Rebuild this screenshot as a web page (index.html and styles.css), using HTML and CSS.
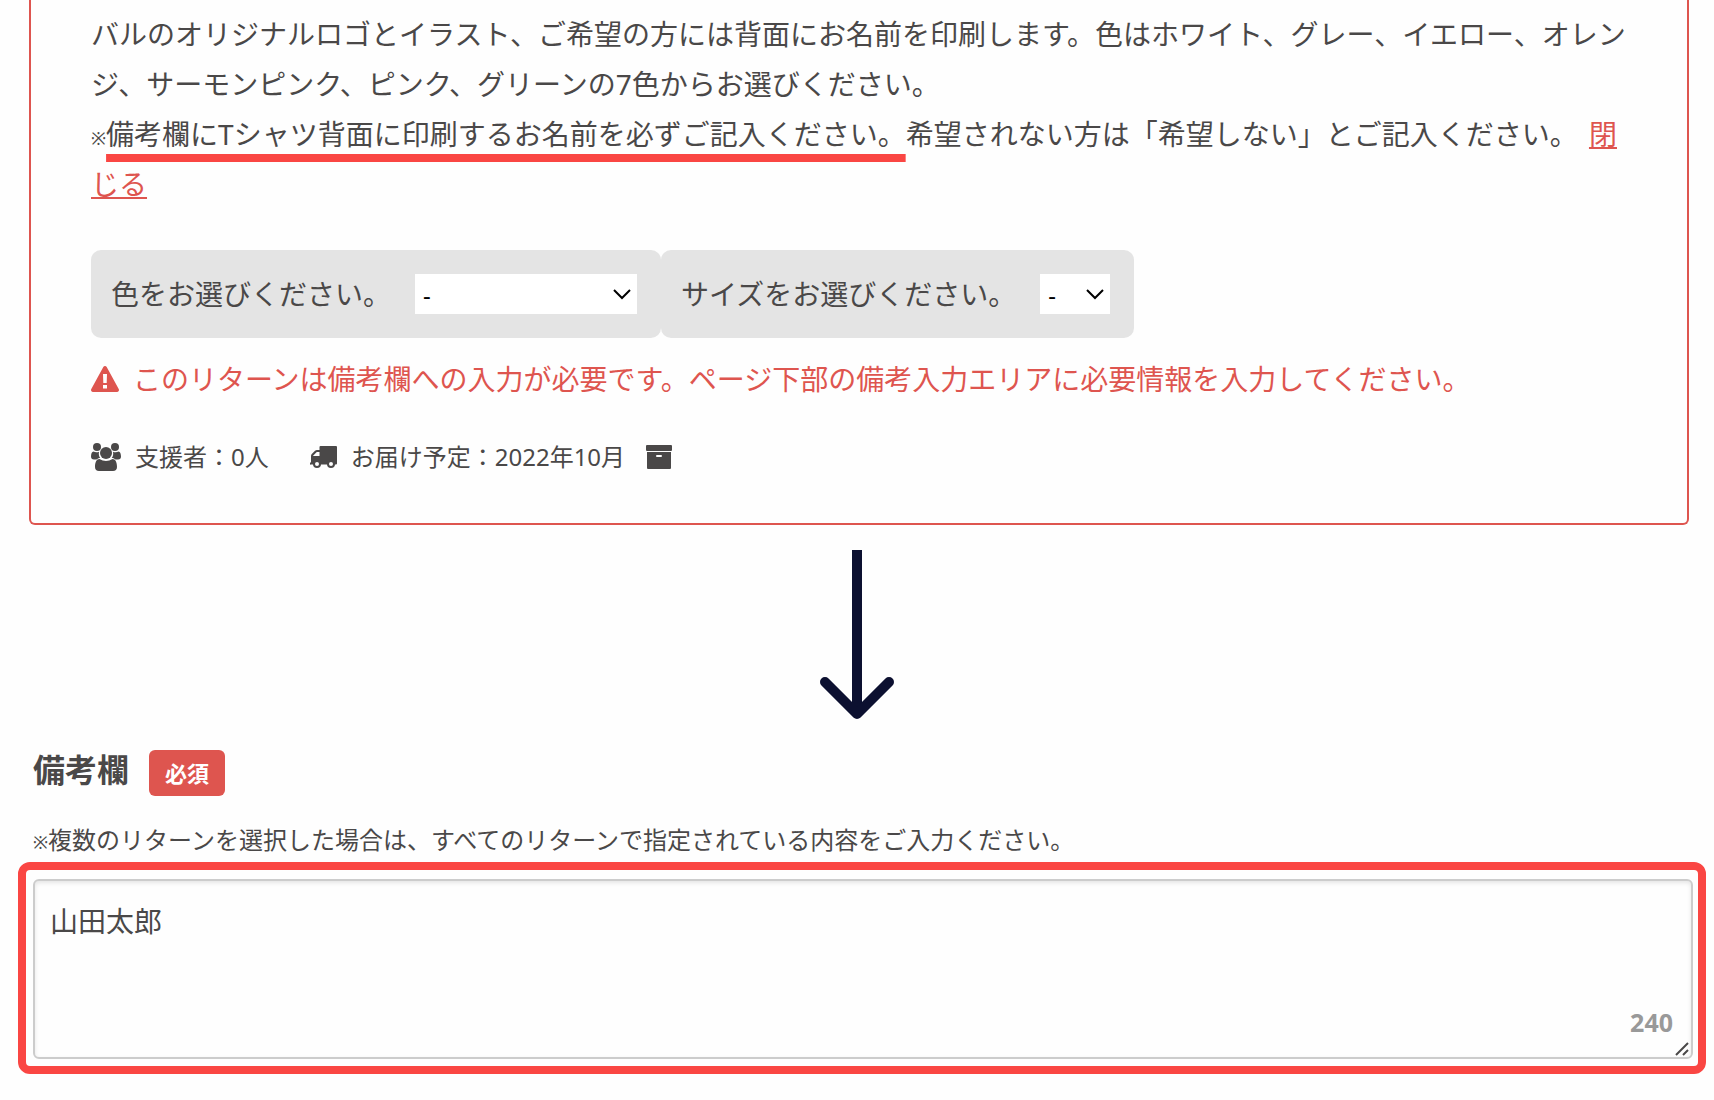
FILE: index.html
```html
<!DOCTYPE html>
<html lang="ja">
<head>
    <meta charset="UTF-8">
    <meta name="viewport" content="width=device-width, initial-scale=1">
    <title>リターンの選択</title>
    <link rel="stylesheet" href="styles.css">
</head>
<body>
    <div class="return-card">
        <p class="description">
            バルのオリジナルロゴとイラスト、ご希望の方には背面にお名前を印刷します。色はホワイト、グレー、イエロー、オレンジ、サーモンピンク、ピンク、グリーンの7色からお選びください。<br>
            <span class="mark">※</span><span class="highlight">備考欄にTシャツ背面に印刷するお名前を必ずご記入ください。</span>希望されない方は「希望しない」とご記入ください。
            <a class="close-link" href="#">閉じる</a>
        </p>

        <div class="options">
            <div class="option">
                <label for="color">色をお選びください。</label>
                <div class="select-wrap">
                    <select id="color" class="select-color">
                        <option>-</option>
                        <option>ホワイト</option>
                        <option>グレー</option>
                        <option>イエロー</option>
                        <option>オレンジ</option>
                        <option>サーモンピンク</option>
                        <option>ピンク</option>
                        <option>グリーン</option>
                    </select>
                    <svg class="chevron" viewBox="0 0 18 12"><path d="M1 2l8 8 8-8"/></svg>
                </div>
            </div>
            <div class="option">
                <label for="size">サイズをお選びください。</label>
                <div class="select-wrap">
                    <select id="size" class="select-size">
                        <option>-</option>
                        <option>S</option>
                        <option>M</option>
                        <option>L</option>
                    </select>
                    <svg class="chevron" viewBox="0 0 18 12"><path d="M1 2l8 8 8-8"/></svg>
                </div>
            </div>
        </div>

        <p class="warning">
            <svg class="icon-warning" viewBox="0 0 28 26">
                <path fill-rule="evenodd" d="M12.3 1a2 2 0 0 1 3.4 0L27.7 23a2 2 0 0 1-1.7 3H2a2 2 0 0 1-1.700-3zM12 8l.3 9h3.400l.3-9zM12 19v3.500h4V19z"/>
            </svg>
            このリターンは備考欄への入力が必要です。ページ下部の備考入力エリアに必要情報を入力してください。
        </p>

        <div class="meta">
            <span class="meta-item">
                <svg class="icon-users" viewBox="0 0 30 28">
                    <circle cx="6" cy="4" r="4"/>
                    <circle cx="24" cy="4" r="4"/>
                    <circle cx="15" cy="10" r="6"/>
                    <path d="M2.500 8.500C4 9.500 6.500 9.500 8 8.700c-.5 2.800 0 4.500 1.200 6.300-1.700 0-2.700.6-3.700 1.500H3c-2 0-3-1-3-3 0-2.500.8-5 2.500-5z"/>
                    <path d="M27.500 8.500c-1.500 1-4 1-5.500.2.500 2.800 0 4.500-1.200 6.300 1.700 0 2.700.6 3.700 1.500H27c2 0 3-1 3-3 0-2.500-.8-5-2.500-5z"/>
                    <path d="M8.500 16c4 2.500 9 2.500 13 0 3 0 4.500 3.500 4.500 8 0 2.500-1.500 4-4 4H8c-2.500 0-4-1.500-4-4 0-4.500 1.500-8 4.500-8z"/>
                </svg>
                支援者：0人
            </span>
            <span class="meta-item">
                <svg class="icon-truck" viewBox="0 0 27 22">
                    <path fill-rule="evenodd" d="M10.500 0H26a1 1 0 0 1 1 1v16.500a1 1 0 0 1-1 1H1a1 1 0 0 1-1-2h1V10c0-1 .3-1.600 1-2.300l3-3C5.600 4.200 6.300 4 7 4h2.500V1a1 1 0 0 1 1-1zM3 10h6.500V6H7.200c-.3 0-.5.1-.7.3L3.300 9.500z"/>
                    <g class="wheels">
                        <circle cx="7" cy="18" r="3"/>
                        <circle cx="21" cy="18" r="3"/>
                    </g>
                </svg>
                お届け予定：2022年10月
            </span>
            <svg class="icon-box" viewBox="0 0 26 24">
                <rect width="26" height="6" rx="1"/>
                <path fill-rule="evenodd" d="M1 7h24v16a1 1 0 0 1-1 1H2a1 1 0 0 1-1-1zM11 10a1 1 0 0 0 0 2h4a1 1 0 0 0 0-2z"/>
            </svg>
        </div>
    </div>

    <svg class="arrow" viewBox="0 0 74 169">
        <path d="M37 0v162"/>
        <path class="arrow-head" d="M5 132l32 32 32-32"/>
    </svg>

    <div class="remarks">
        <div class="remarks-title">
            <h2><label for="remarks">備考欄</label></h2>
            <span class="badge">必須</span>
        </div>
        <p class="note"><span class="mark">※</span>複数のリターンを選択した場合は、すべてのリターンで指定されている内容をご入力ください。</p>
    </div>

    <div class="frame">
        <textarea id="remarks">山田太郎</textarea>
        <span class="counter">240</span>
        <svg class="grip" viewBox="0 0 14 14"><path d="M1 13L13 1M8 13l5-5"/></svg>
    </div>
</body>
</html>
```

FILE: styles.css
```css
* {
    margin: 0;
    padding: 0;
    box-sizing: border-box;
}

body {
    font-family: "Noto Sans", "Noto Sans CJK JP", sans-serif;
    font-size: 28px;
    line-height: 50px;
    color: #4a4848;
    background: #fefefe;
}

svg {
    flex: none;
    fill: currentColor;
}

.return-card {
    margin: 0 25px 0 29px;
    padding: 9px 56px 42px 60px;
    border: 2px solid #de554f;
    border-top: none;
    border-radius: 0 0 6px 6px;
}

.mark {
    font-size: 18px;
    line-height: 1;
}

.highlight {
    text-decoration: underline 8px #fa4643;
    text-underline-offset: 9px;
    text-decoration-skip-ink: none;
}

.close-link {
    margin-left: 4px;
    color: #de554f;
    text-decoration: underline 2px;
    text-underline-offset: 2px;
    text-decoration-skip-ink: none;
}

.options {
    display: flex;
    margin: 41px 0 16px;
}

.option {
    display: flex;
    align-items: center;
    gap: 24px;
    height: 88px;
    padding: 0 24px 0 20px;
    background: #e4e4e4;
    border-radius: 10px;
}

.select-wrap {
    position: relative;
    display: flex;
}

select {
    height: 40px;
    padding: 0 8px;
    border: none;
    border-radius: 0;
    background: #fff;
    color: #000;
    font-family: inherit;
    font-size: 24px;
    appearance: none;
}

.select-color {
    width: 222px;
}

.select-size {
    width: 70px;
}

.chevron {
    position: absolute;
    right: 6px;
    top: 14px;
    width: 18px;
    height: 12px;
    fill: none;
    stroke: #000;
    stroke-width: 2;
    pointer-events: none;
}

.warning {
    display: flex;
    align-items: center;
    gap: 14px;
    color: #de554f;
}

.icon-warning {
    width: 28px;
    height: 26px;
}

.meta {
    display: flex;
    align-items: center;
    margin-top: 29px;
    font-size: 24px;
    line-height: 48px;
}

.meta-item {
    display: flex;
    align-items: center;
    gap: 14px;
}

.meta-item + .meta-item {
    margin: 0 21px 0 41px;
}

.icon-users {
    width: 30px;
    height: 28px;
}

.icon-truck {
    width: 27px;
    height: 22px;
}

.wheels {
    fill: #fefefe;
    stroke: #4a4848;
    stroke-width: 2;
}

.icon-box {
    width: 26px;
    height: 24px;
}

.arrow {
    display: block;
    width: 74px;
    height: 169px;
    margin: 25px auto 31px;
    fill: none;
    stroke: #0c1030;
    stroke-width: 10;
}

.arrow-head {
    stroke-linecap: round;
    stroke-linejoin: round;
}

.remarks {
    padding-left: 33px;
}

.remarks-title {
    display: flex;
    gap: 20px;
}

h2 {
    font-size: 32px;
    line-height: 40px;
}

.badge {
    height: 46px;
    padding: 0 16px;
    border-radius: 6px;
    background: #de554f;
    color: #fff;
    font-size: 22px;
    font-weight: bold;
    line-height: 46px;
}

.note {
    margin-top: 22px;
    font-size: 24px;
    line-height: 44px;
}

.frame {
    position: relative;
    display: flex;
    margin: 0 8px 0 18px;
    padding: 9px 5px 7px 7px;
    border: 8px solid #fa4643;
    border-radius: 12px;
}

textarea {
    width: 100%;
    height: 180px;
    padding: 15px;
    border: 2px solid #ccc;
    border-radius: 6px;
    background: #fefefe;
    box-shadow: inset 0 2px 4px rgba(0, 0, 0, 0.1);
    color: inherit;
    font-family: inherit;
    font-size: 28px;
    line-height: 50px;
    resize: none;
}

.counter {
    position: absolute;
    right: 25px;
    bottom: 19px;
    color: #999;
    font-size: 25px;
    font-weight: bold;
}

.grip {
    position: absolute;
    right: 9px;
    bottom: 10px;
    width: 14px;
    height: 14px;
    stroke: #4a4848;
    stroke-width: 2;
    pointer-events: none;
}
```
